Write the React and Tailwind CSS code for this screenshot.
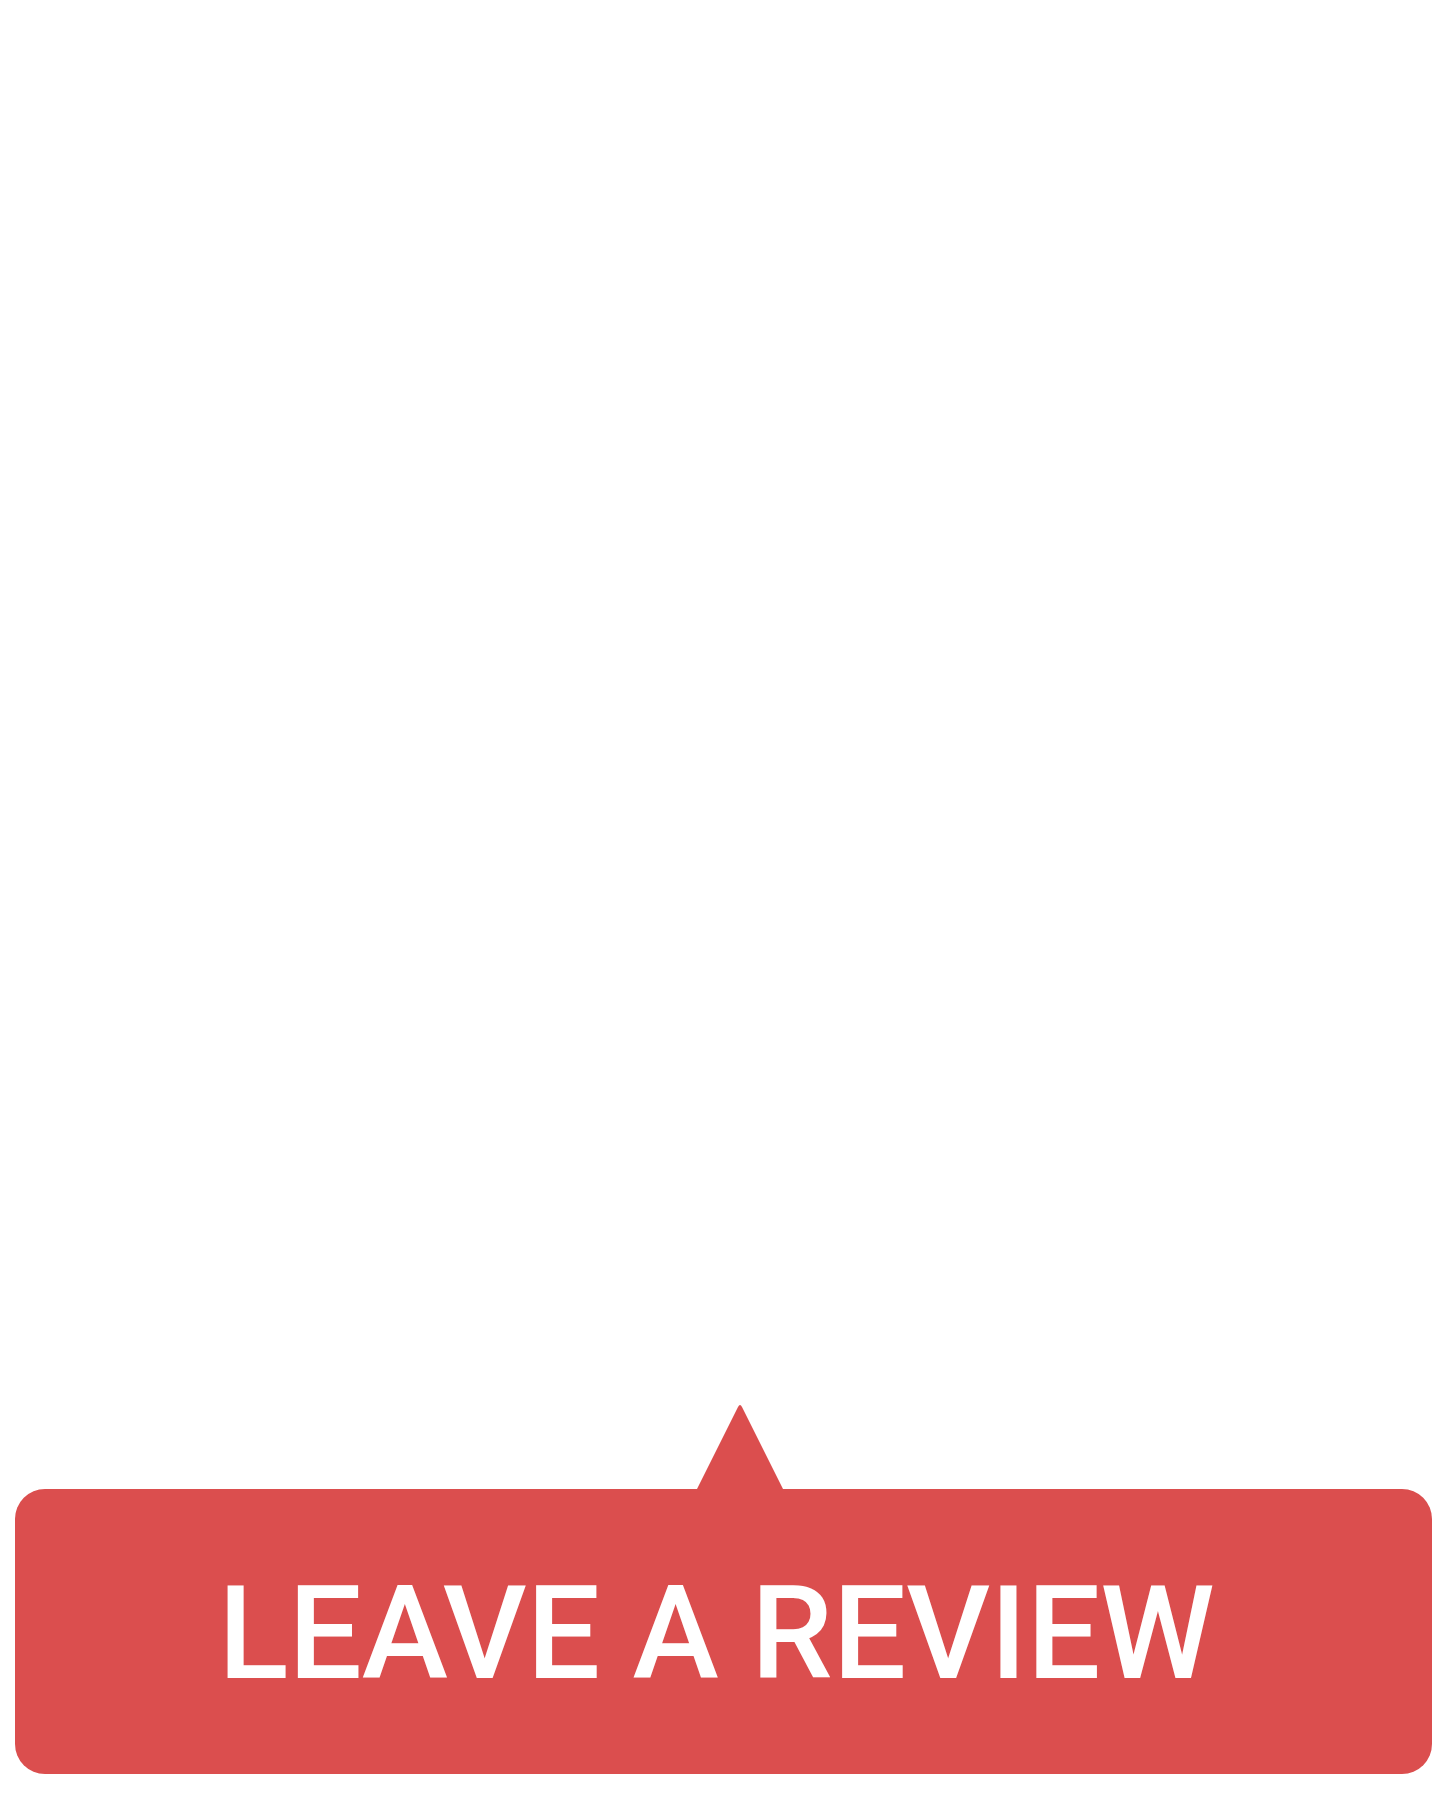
export default function App() {
  return (
    <div className="h-[1801px] w-full bg-white flex flex-col justify-end px-[15px] pb-[27px]">
      {/* pointer */}
      <div className="flex pl-[682px]">
        <svg width="86" height="85" viewBox="0 0 86 85" className="block">
          <path d="M0 85 L41 3 Q43 -1 45 3 L86 85 Z" fill="#db4e4e" />
        </svg>
      </div>
      <button
        type="button"
        className="w-full h-[285px] rounded-[30px] bg-[#db4e4e] flex items-center justify-center text-white text-[130px] leading-none font-medium uppercase pr-[14px] pt-[4px]"
        style={{ fontFamily: 'Roboto, "Open Sans", sans-serif' }}
      >
        Leave a Review
      </button>
    </div>
  );
}
